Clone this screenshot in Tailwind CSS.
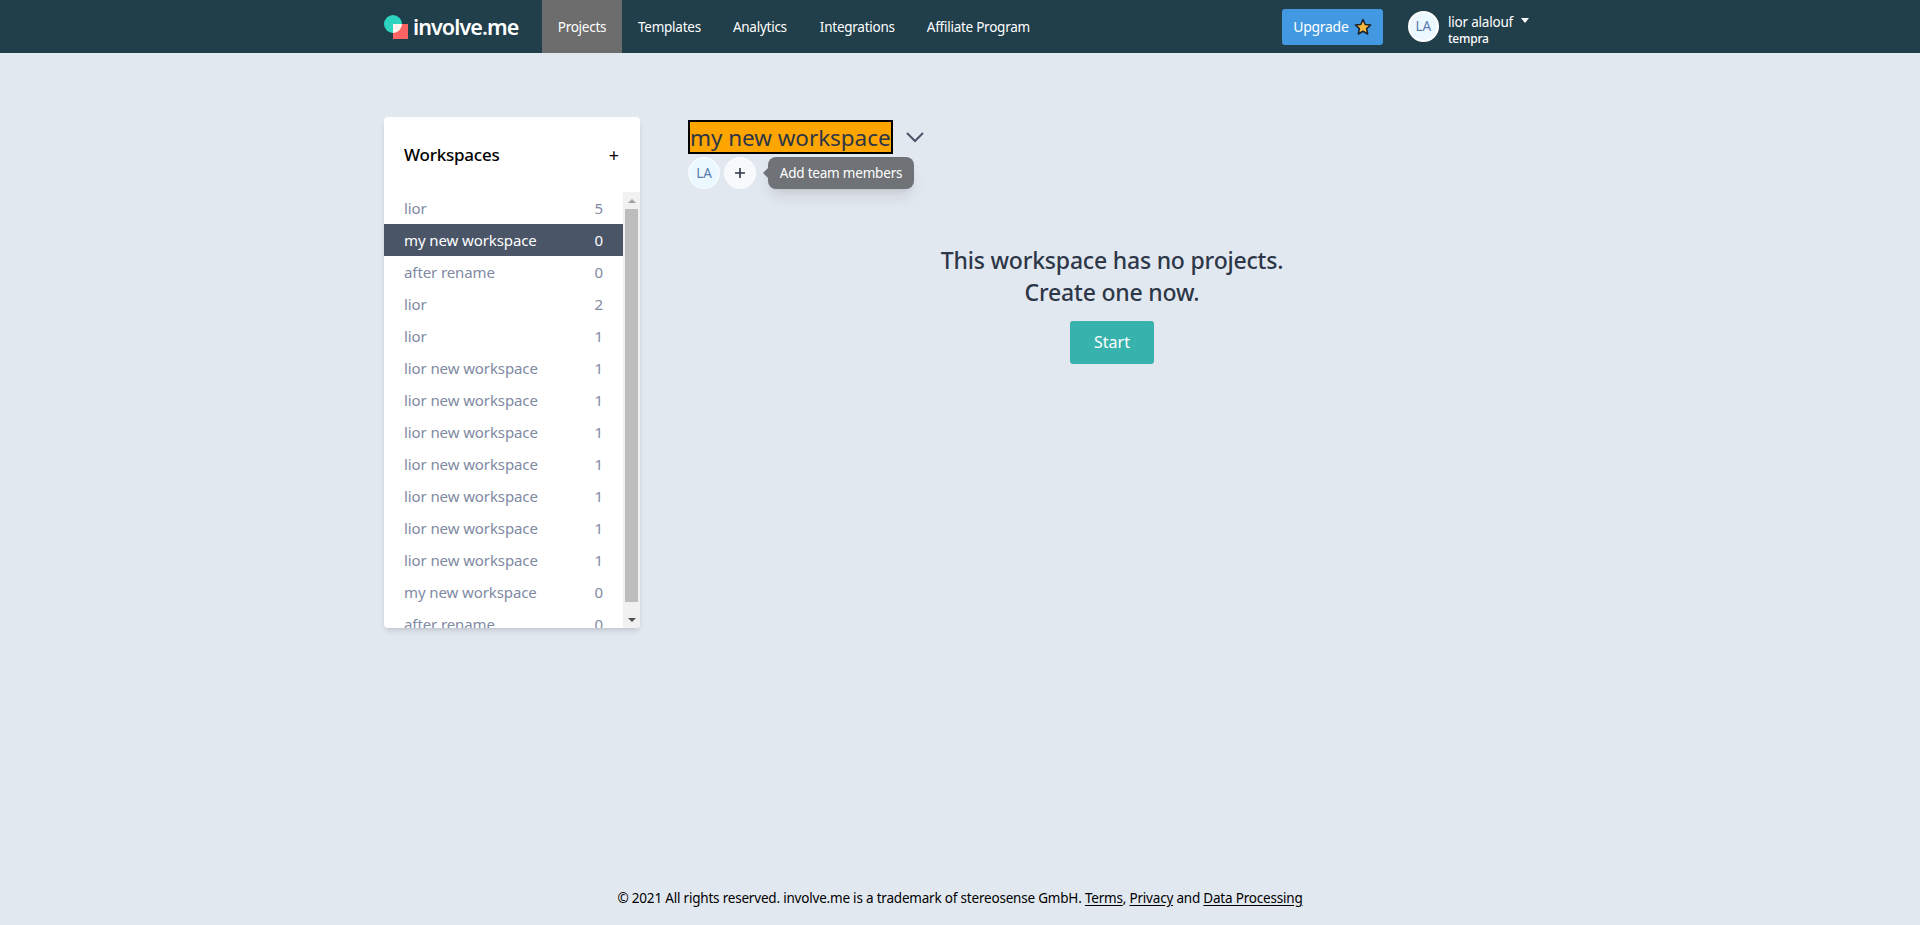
<!DOCTYPE html>
<html lang="en">
<head>
  <meta charset="UTF-8" />
  <title>involve.me</title>
  <script src="https://cdn.jsdelivr.net/npm/@tailwindcss/browser@4"></script>
</head>
<body class="bg-[#e2e8f0] h-[925px] overflow-hidden relative font-['Noto_Sans',sans-serif]">

  <!-- top nav -->
  <header class="h-[53px] bg-[#213e4b] flex items-stretch pl-[384px] text-white">
    <a class="w-[158px] flex items-center">
      <svg width="24" height="24" viewBox="0 0 24 24" class="shrink-0 mt-[1px]">
        <circle cx="9" cy="9" r="9" fill="#2dd4bf" />
        <rect x="9" y="9" width="15" height="15" fill="#fc6464" />
        <path d="M9 9h9a9 9 0 0 1-9 9z" fill="#fdf4f0" />
      </svg>
      <span class="text-[21.5px] font-semibold tracking-[-0.9px] ml-[5px] leading-none">involve.me</span>
    </a>
    <nav class="flex text-[13.5px] tracking-[-0.25px]">
      <a class="w-[80px] bg-[#6d6d6d] flex items-center justify-center pt-[2px]">Projects</a>
      <a class="ml-[16px] flex items-center pt-[2px]">Templates</a>
      <a class="ml-[32px] flex items-center pt-[2px]">Analytics</a>
      <a class="ml-[33px] flex items-center pt-[2px]">Integrations</a>
      <a class="ml-[32px] flex items-center pt-[2px]">Affiliate Program</a>
    </nav>
    <div class="ml-[252px] flex items-center">
      <button class="w-[101px] h-[36px] bg-[#4299e1] rounded-[3px] text-[14px] tracking-[-0.3px] flex items-center justify-center gap-[5px]">
        Upgrade
        <svg width="18" height="18" viewBox="0 0 24 24"><path d="M12 2l3 6.6 7.2.8-5.4 4.8 1.500 7.100L12 17.700l-6.300 3.600 1.500-7.100L1.800 9.400 9 8.600z" fill="#f6b93b" stroke="#1a202c" stroke-width="2" stroke-linejoin="round" /></svg>
      </button>
      <div class="ml-[25px] w-[31px] h-[31px] rounded-full bg-[#ebf8ff] border-2 border-white flex items-center justify-center text-[13.5px] text-[#5a7cab]">LA</div>
      <div class="ml-[9px] leading-none pt-[8px]">
        <div class="flex items-center text-[13.5px] tracking-[-0.2px]">lior alalouf
          <span class="ml-[8px] -mt-[4px] w-0 h-0 border-x-[4.5px] border-x-transparent border-t-[5px] border-t-white"></span>
        </div>
        <div class="text-[12px] mt-[4px] font-medium tracking-[-0.2px]">tempra</div>
      </div>
    </div>
  </header>

  <main class="flex pl-[384px] pt-[64px]">
    <!-- workspaces card -->
    <aside class="w-[256px] h-[511px] bg-white rounded-[4px] shadow-md overflow-hidden shrink-0">
      <div class="h-[75px] pl-[20px] pr-[21px] flex items-center justify-between text-black">
        <h2 class="text-[17px] font-medium tracking-[-0.2px]">Workspaces</h2>
        <span class="text-[18px] leading-none">+</span>
      </div>
      <div class="flex h-[436px]">
        <ul class="w-[239px] overflow-hidden text-[15px] tracking-[-0.1px] text-[#7f8aa3]">
          <li class="h-[32px] px-[20px] flex items-center justify-between"><span>lior</span><span>5</span></li>
          <li class="h-[32px] px-[20px] flex items-center justify-between bg-[#4a5568] text-white"><span>my new workspace</span><span>0</span></li>
          <li class="h-[32px] px-[20px] flex items-center justify-between"><span>after rename</span><span>0</span></li>
          <li class="h-[32px] px-[20px] flex items-center justify-between"><span>lior</span><span>2</span></li>
          <li class="h-[32px] px-[20px] flex items-center justify-between"><span>lior</span><span>1</span></li>
          <li class="h-[32px] px-[20px] flex items-center justify-between"><span>lior new workspace</span><span>1</span></li>
          <li class="h-[32px] px-[20px] flex items-center justify-between"><span>lior new workspace</span><span>1</span></li>
          <li class="h-[32px] px-[20px] flex items-center justify-between"><span>lior new workspace</span><span>1</span></li>
          <li class="h-[32px] px-[20px] flex items-center justify-between"><span>lior new workspace</span><span>1</span></li>
          <li class="h-[32px] px-[20px] flex items-center justify-between"><span>lior new workspace</span><span>1</span></li>
          <li class="h-[32px] px-[20px] flex items-center justify-between"><span>lior new workspace</span><span>1</span></li>
          <li class="h-[32px] px-[20px] flex items-center justify-between"><span>lior new workspace</span><span>1</span></li>
          <li class="h-[32px] px-[20px] flex items-center justify-between"><span>my new workspace</span><span>0</span></li>
          <li class="h-[32px] px-[20px] flex items-center justify-between"><span>after rename</span><span>0</span></li>
        </ul>
        <!-- scrollbar -->
        <div class="w-[17px] bg-[#f1f1f1] flex flex-col items-center">
          <div class="h-[17px] flex items-center justify-center"><span class="w-0 h-0 border-x-[4px] border-x-transparent border-b-[4px] border-b-[#a3a3a3]"></span></div>
          <div class="w-[13px] h-[393px] bg-[#bdbdbd]"></div>
          <div class="flex-1 flex items-end justify-center"><span class="mb-[6px] w-0 h-0 border-x-[4px] border-x-transparent border-t-[4px] border-t-[#505050]"></span></div>
        </div>
      </div>
    </aside>

    <!-- workspace detail -->
    <section class="ml-[48px] w-[848px] relative">
      <div class="flex items-center mt-[3px]">
        <h1 class="h-[34px] bg-[#ffa500] border-2 border-black text-[#2d3748] text-[22.5px] tracking-[-0.05px] leading-[31px] w-[205px] whitespace-nowrap">my new workspace</h1>
        <svg width="20" height="12" viewBox="0 0 20 12" class="ml-[12px]" fill="none" stroke="#4a5568" stroke-width="2"><path d="M2 2l8 8 8-8" /></svg>
      </div>
      <div class="flex items-center mt-[3px]">
        <div class="w-[32px] h-[32px] rounded-full bg-[#ebf8ff] border border-white flex items-center justify-center text-[13.5px] text-[#5a7cab]">LA</div>
        <div class="ml-[4px] w-[32px] h-[32px] rounded-full bg-[#f7fafc] border border-white flex items-center justify-center">
          <svg width="12" height="12" viewBox="0 0 12 12" stroke="#2d3748" stroke-width="1.600"><path d="M6 1v10M1 6h10" /></svg>
        </div>
        <div class="relative ml-[12px] w-[146px] h-[32px] bg-[#6f7276] rounded-[8px] shadow-lg text-white text-[13.5px] tracking-[-0.2px] flex items-center justify-center">
          <span class="absolute -left-[5px] top-[11px] w-0 h-0 border-y-[5px] border-y-transparent border-r-[5px] border-r-[#6f7276]"></span>
          Add team members
        </div>
      </div>

      <div class="mt-[55px] text-center text-[#2d3748] text-[23px] font-medium leading-[32px] tracking-[-0.2px] w-[848px]">
        <p>This workspace has no projects.</p>
        <p>Create one now.</p>
      </div>
      <div class="mt-[13px] flex justify-center">
        <button class="w-[84px] h-[43px] bg-[#38b2ac] rounded-[3px] text-white text-[16px] pb-[1px]">Start</button>
      </div>
    </section>
  </main>

  <footer class="absolute left-0 right-0 top-[888px] text-center text-[13.5px] tracking-[-0.2px] text-black leading-[20px]">
    © 2021 All rights reserved. involve.me is a trademark of stereosense GmbH. <a class="underline underline-offset-2">Terms</a>, <a class="underline underline-offset-2">Privacy</a> and <a class="underline underline-offset-2">Data Processing</a>
  </footer>
</body>
</html>
